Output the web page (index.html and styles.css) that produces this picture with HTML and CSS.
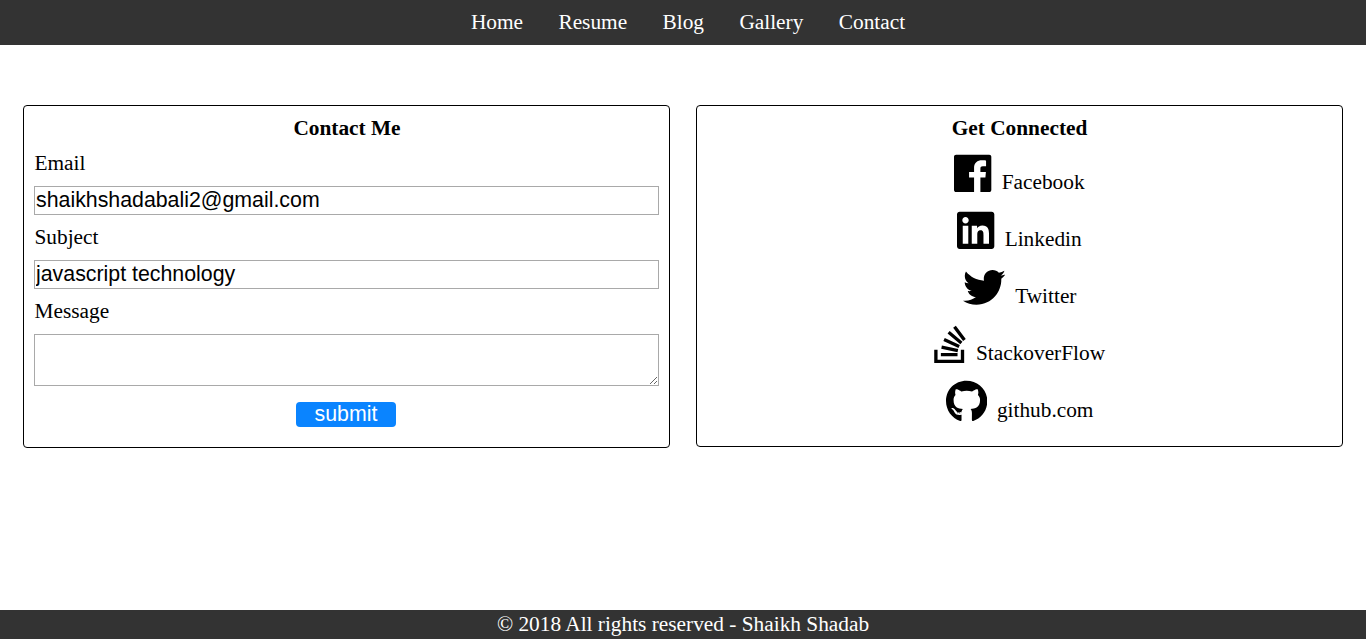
FILE: index.html
```html
<!DOCTYPE html>
<html lang="en">
<head>
<meta charset="utf-8">
<title>Contact</title>
<link rel="stylesheet" href="styles.css">
</head>
<body>
<nav class="nav">
  <a>Home</a><a>Resume</a><a>Blog</a><a>Gallery</a><a>Contact</a>
</nav>
<main class="main">
  <form class="card card-form">
    <h1 class="title">Contact Me</h1>
    <label class="label" for="email">Email</label>
    <input class="field" id="email" type="text" value="shaikhshadabali2@gmail.com" spellcheck="false">
    <label class="label" for="subject">Subject</label>
    <input class="field" id="subject" type="text" value="javascript technology" spellcheck="false">
    <label class="label" for="message">Message</label>
    <textarea class="field area" id="message"></textarea>
    <button class="submit" type="button">submit</button>
  </form>
  <section class="card card-links">
    <h2 class="title">Get Connected</h2>
    <a class="link"><svg class="icon" viewBox="0 0 448 512"><path d="M448 56.7v398.5c0 13.7-11.1 24.7-24.7 24.7H317V306.5h60l6-67.6h-66v-40c0-19.6 8-28 30-28h38v-69c-6-.8-22-2.7-49-2.7-56 0-95 31.5-95 89.4v50.3h-60v67.6h60V480H24.7C11.1 480 0 468.9 0 455.3V56.7C0 43.1 11.1 32 24.7 32h398.5c13.7 0 24.8 11.1 24.8 24.7z"/></svg><span class="name">Facebook</span></a>
    <a class="link"><svg class="icon" viewBox="0 0 448 512"><path d="M416 32H31.9C14.3 32 0 46.5 0 64.3v383.4C0 465.5 14.3 480 31.9 480H416c17.6 0 32-14.5 32-32.3V64.3c0-17.8-14.4-32.3-32-32.3zM135.4 416H69V202.2h66.5V416zm-33.2-243c-21.3 0-38.5-17.3-38.5-38.5S80.9 96 102.2 96c21.2 0 38.5 17.3 38.5 38.5 0 21.3-17.2 38.5-38.5 38.5zm282.1 243h-66.4V312c0-24.8-.5-56.7-34.5-56.7-34.6 0-39.9 27-39.9 54.9V416h-66.4V202.2h63.7v29.2h.9c8.9-16.8 30.6-34.5 62.9-34.5 67.2 0 79.7 44.3 79.7 101.9V416z"/></svg><span class="name">Linkedin</span></a>
    <a class="link"><svg class="icon" viewBox="0 0 512 512"><path d="M459.37 151.716c.325 4.548.325 9.097.325 13.645 0 138.72-105.583 298.558-298.558 298.558-59.452 0-114.68-17.219-161.137-47.106 8.447.974 16.568 1.299 25.34 1.299 49.055 0 94.213-16.568 130.274-44.832-46.132-.975-84.792-31.188-98.112-72.772 6.498.974 12.995 1.624 19.818 1.624 9.421 0 18.843-1.3 27.614-3.573-48.081-9.747-84.143-51.98-84.143-102.985v-1.299c13.969 7.797 30.214 12.67 47.431 13.319-28.264-18.843-46.781-51.005-46.781-87.391 0-19.492 5.197-37.36 14.294-52.954 51.655 63.675 129.3 105.258 216.365 109.807-1.624-7.797-2.599-15.918-2.599-24.04 0-57.828 46.782-104.934 104.934-104.934 30.213 0 57.502 12.67 76.67 33.137 23.715-4.548 46.456-13.32 66.599-25.34-7.798 24.366-24.366 44.833-46.132 57.827 21.117-2.273 41.584-8.122 60.426-16.243-14.292 20.791-32.161 39.308-52.628 54.253z"/></svg><span class="name">Twitter</span></a>
    <a class="link"><svg class="icon" viewBox="0 0 384 512"><path d="M290.7 311L95 269.7 86.8 309l195.7 41zm51-87L188.2 95.7l-25.5 30.8 153.5 128.3zm-31.2 39.7L129.2 179l-16.7 36.5L293.7 300zM262 32l-32 24 119.3 160.3 32-24zm20.5 328h-200v39.7h200zm39.7 80H42.7V320h-40v160h359.5V320h-40z"/></svg><span class="name">StackoverFlow</span></a>
    <a class="link"><svg class="icon" viewBox="0 0 496 512"><path d="M165.9 397.4c0 2-2.3 3.6-5.2 3.6-3.3.3-5.6-1.3-5.6-3.6 0-2 2.3-3.6 5.2-3.6 3-.3 5.6 1.3 5.6 3.6zm-31.1-4.5c-.7 2 1.3 4.3 4.3 4.9 2.6 1 5.6 0 6.2-2s-1.3-4.3-4.3-5.2c-2.6-.7-5.5.3-6.2 2.3zm44.2-1.7c-2.9.7-4.9 2.6-4.6 4.9.3 2 2.9 3.3 5.9 2.6 2.9-.7 4.9-2.6 4.6-4.6-.3-1.9-3-3.2-5.9-2.9zM244.8 8C106.1 8 0 113.3 0 252c0 110.9 69.8 205.8 169.5 239.2 12.8 2.3 17.3-5.6 17.3-12.1 0-6.2-.3-40.4-.3-61.4 0 0-70 15-84.7-29.8 0 0-11.4-29.1-27.8-36.6 0 0-22.9-15.7 1.6-15.4 0 0 24.9 2 38.6 25.8 21.9 38.6 58.6 27.5 72.9 20.9 2.3-16 8.8-27.1 16-33.7-55.9-6.2-112.3-14.3-112.3-110.5 0-27.5 7.6-41.3 23.6-58.9-2.6-6.5-11.1-33.3 2.6-67.9 20.9-6.5 69 27 69 27 20-5.6 41.5-8.5 62.8-8.5s42.8 2.9 62.8 8.5c0 0 48.1-33.6 69-27 13.7 34.7 5.2 61.4 2.6 67.9 16 17.7 25.8 31.5 25.8 58.9 0 96.5-58.9 104.2-114.8 110.5 9.2 7.9 17 22.9 17 46.4 0 33.7-.3 75.4-.3 83.6 0 6.5 4.6 14.4 17.3 12.1C428.2 457.8 496 362.9 496 252 496 113.3 383.5 8 244.8 8z"/></svg><span class="name">github.com</span></a>
  </section>
</main>
<footer class="footer">© 2018 All rights reserved - Shaikh Shadab</footer>
</body>
</html>
```
FILE: styles.css
```css
* { box-sizing: border-box; }
body {
  margin: 0;
  height: 639px;
  display: flex;
  flex-direction: column;
  background: #fff;
  color: #000;
  font: 21.33px/25px "Liberation Serif", "Times New Roman", serif;
}
.nav {
  height: 45px;
  padding-left: 10px;
  display: flex;
  justify-content: center;
  gap: 35.4px;
  line-height: 44px;
  background: #333;
  color: #fff;
}
.main {
  flex: 1;
  display: grid;
  grid-template-columns: 1fr 1fr;
  gap: 26px;
  align-items: start;
  padding: 60px 23px 0;
}
.card {
  border: 1px solid #000;
  border-radius: 4px;
  padding: 10px;
  display: flex;
  flex-direction: column;
}
.card-form { height: 343px; }
.card-links { height: 342px; }
.title {
  margin: 0;
  font-size: inherit;
  font-weight: bold;
  line-height: 25px;
  text-align: center;
}
.card-form .title { padding-left: 1px; }
.label { line-height: 45px; padding-left: 0.5px; }
.field {
  width: 100%;
  height: 29px;
  margin: 0;
  padding: 1px;
  border: 1px solid #a9a9a9;
  border-radius: 0;
  background: #fff;
  color: #000;
  font: 21.33px "Liberation Sans", Arial, sans-serif;
}
.area { height: 52px; resize: both; }
.submit {
  align-self: center;
  width: 100px;
  height: 25px;
  margin: 16px 1px 0 0;
  padding: 0;
  border: 0;
  border-radius: 4px;
  background: #0a84ff;
  color: #fff;
  font: 21.33px/25px "Liberation Sans", Arial, sans-serif;
}
.card-links .title { margin-bottom: 3.5px; }
.link {
  height: 57px;
  display: flex;
  justify-content: center;
  align-items: center;
  gap: 10px;
}
.icon { height: 42.67px; fill: #000; }
.name { padding-top: 19px; }
.footer {
  height: 29px;
  line-height: 29px;
  text-align: center;
  background: #333;
  color: #fff;
}
```
